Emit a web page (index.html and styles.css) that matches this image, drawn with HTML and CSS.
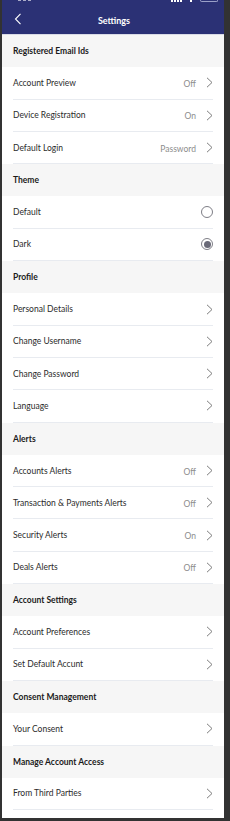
FILE: index.html
```html
<!DOCTYPE html>
<html>
<head>
<meta charset="utf-8">
<link rel="stylesheet" href="styles.css">
</head>
<body>
<div class="phone">
  <header class="topbar">
    <div class="status">
      <span class="time"><i></i><i></i><i></i></span>
      <span class="icons">
        <span class="signal"><i></i><i></i><i></i><i></i></span>
        <span class="wifi"></span>
        <span class="battery"></span>
      </span>
    </div>
    <div class="navbar">
      <svg class="back" width="8" height="12" viewBox="0 0 8 12"><path d="M6.5 0.8 L1.5 6 L6.5 11.2" fill="none" stroke="#fff" stroke-width="1.1"/></svg>
      <span class="title">Settings</span>
    </div>
  </header>

  <div class="section">Registered Email Ids</div>
  <div class="row"><span class="label">Account Preview</span><span class="value">Off</span><svg class="chev" viewBox="0 0 7 11"><path d="M1 0.8 L6 5.5 L1 10.2"/></svg></div>
  <div class="row"><span class="label">Device Registration</span><span class="value">On</span><svg class="chev" viewBox="0 0 7 11"><path d="M1 0.8 L6 5.5 L1 10.2"/></svg></div>
  <div class="row"><span class="label">Default Login</span><span class="value">Password</span><svg class="chev" viewBox="0 0 7 11"><path d="M1 0.8 L6 5.5 L1 10.2"/></svg></div>

  <div class="section">Theme</div>
  <div class="row"><span class="label">Default</span><span class="radio"></span></div>
  <div class="row last"><span class="label">Dark</span><span class="radio on"></span></div>

  <div class="section">Profile</div>
  <div class="row"><span class="label">Personal Details</span><svg class="chev" viewBox="0 0 7 11"><path d="M1 0.8 L6 5.5 L1 10.2"/></svg></div>
  <div class="row"><span class="label">Change Username</span><svg class="chev" viewBox="0 0 7 11"><path d="M1 0.8 L6 5.5 L1 10.2"/></svg></div>
  <div class="row"><span class="label">Change Password</span><svg class="chev" viewBox="0 0 7 11"><path d="M1 0.8 L6 5.5 L1 10.2"/></svg></div>
  <div class="row"><span class="label">Language</span><svg class="chev" viewBox="0 0 7 11"><path d="M1 0.8 L6 5.5 L1 10.2"/></svg></div>

  <div class="section">Alerts</div>
  <div class="row"><span class="label">Accounts Alerts</span><span class="value">Off</span><svg class="chev" viewBox="0 0 7 11"><path d="M1 0.8 L6 5.5 L1 10.2"/></svg></div>
  <div class="row"><span class="label">Transaction &amp; Payments Alerts</span><span class="value">Off</span><svg class="chev" viewBox="0 0 7 11"><path d="M1 0.8 L6 5.5 L1 10.2"/></svg></div>
  <div class="row"><span class="label">Security Alerts</span><span class="value">On</span><svg class="chev" viewBox="0 0 7 11"><path d="M1 0.8 L6 5.5 L1 10.2"/></svg></div>
  <div class="row"><span class="label">Deals Alerts</span><span class="value">Off</span><svg class="chev" viewBox="0 0 7 11"><path d="M1 0.8 L6 5.5 L1 10.2"/></svg></div>

  <div class="section">Account Settings</div>
  <div class="row"><span class="label">Account Preferences</span><svg class="chev" viewBox="0 0 7 11"><path d="M1 0.8 L6 5.5 L1 10.2"/></svg></div>
  <div class="row last"><span class="label">Set Default Accunt</span><svg class="chev" viewBox="0 0 7 11"><path d="M1 0.8 L6 5.5 L1 10.2"/></svg></div>

  <div class="section">Consent Management</div>
  <div class="row"><span class="label">Your Consent</span><svg class="chev" viewBox="0 0 7 11"><path d="M1 0.8 L6 5.5 L1 10.2"/></svg></div>

  <div class="section">Manage Account Access</div>
  <div class="row"><span class="label">From Third Parties</span><svg class="chev" viewBox="0 0 7 11"><path d="M1 0.8 L6 5.5 L1 10.2"/></svg></div>
</div>
</body>
</html>
```

FILE: styles.css
```css
* { box-sizing: border-box; }
html, body { margin: 0; padding: 0; }
body {
  background: #323232;
  width: 230px;
  height: 821px;
  overflow: hidden;
  font-family: "Lato", "Open Sans", sans-serif;
}
.phone {
  width: 222px;
  height: 818px;
  margin-left: 2px;
  background: #ffffff;
  overflow: hidden;
  display: flex;
  flex-direction: column;
}
.topbar {
  background: #2b3175;
  height: 35px;
  flex: none;
  display: flex;
  flex-direction: column;
}
.status {
  height: 3px;
  overflow: hidden;
  display: flex;
  justify-content: space-between;
  align-items: flex-start;
  padding: 0 6px 0 16px;
}
.time { display: flex; gap: 2px; opacity: 0.6; }
.time i { display: block; width: 3px; height: 1px; background: #fff; }
.icons { display: flex; align-items: flex-start; gap: 8px; height: 3px; }
.signal { display: flex; align-items: flex-start; gap: 1px; }
.signal i { display: block; width: 2px; height: 2px; background: #fff; }
.wifi { display: block; width: 2px; height: 2px; background: #fff; }
.battery {
  display: block; width: 18px; height: 2px;
  border: 1px solid #9aa0c8; border-top: none;
  border-radius: 0 0 2px 2px;
}
.navbar {
  flex: 1;
  display: flex;
  align-items: center;
  justify-content: center;
  position: relative;
  border-bottom: 1px solid #d9dbe6;
}
.back { position: absolute; left: 12px; top: 10px; }
.title {
  color: #fff;
  font-size: 9px;
  font-weight: 700;
  margin-top: 3px;
  margin-left: 2px;
}
.section {
  height: 32.3px;
  flex: none;
  background: #f6f6f6;
  display: flex;
  align-items: center;
  padding-left: 11px;
  font-size: 8.5px;
  font-weight: 700;
  color: #1b1b1b;
}
.row {
  height: 32.3px;
  flex: none;
  display: flex;
  align-items: center;
  margin: 0 11px;
  border-bottom: 1px solid #e8ebf0;
  font-size: 8.5px;
  color: #2b2b2b;
}
.label { flex: 1; }
.value {
  color: #8c8c8c;
  margin-right: 10px;
  margin-top: 2px;
}
.chev {
  width: 7px;
  height: 11px;
}
.chev path { fill: none; stroke: #7c7c7c; stroke-width: 1; }
.radio {
  width: 12px;
  height: 12px;
  border: 1px solid #7e7e86;
  border-radius: 50%;
  position: relative;
}
.radio.on::after {
  content: "";
  position: absolute;
  left: 1.5px; top: 1.5px;
  width: 7px; height: 7px;
  border-radius: 50%;
  background: #6a6a78;
}
```
